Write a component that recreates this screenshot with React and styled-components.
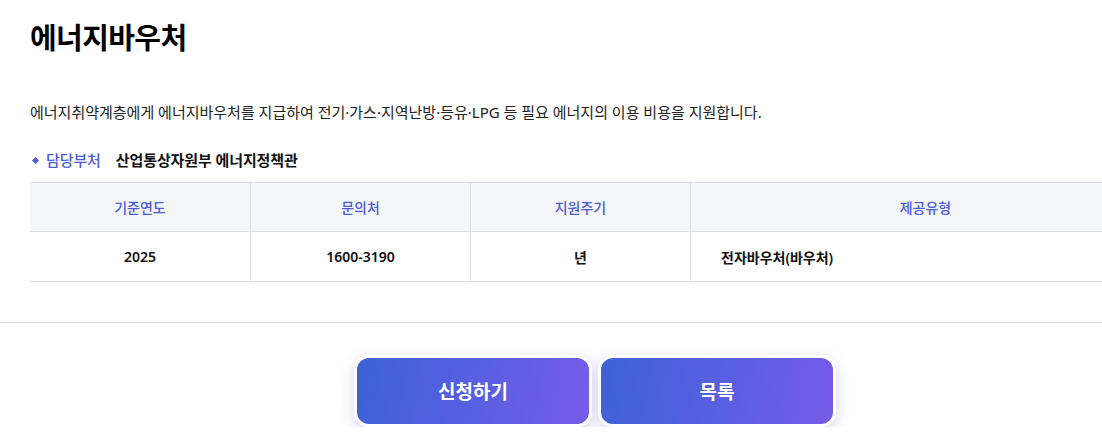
import React from 'react'
import styled, { createGlobalStyle } from 'styled-components'

const GlobalStyle = createGlobalStyle`
  html, body {
    margin: 0;
    padding: 0;
    background: #fff;
    overflow: hidden;
  }
  body {
    font-family: "Noto Sans", "Noto Sans CJK KR", sans-serif;
    color: #111;
  }
`

const Page = styled.div`
  width: 1190px;
  box-sizing: border-box;
`

const Section = styled.div`
  padding: 0 30px;
`

const Title = styled.h1`
  margin: 0;
  padding-top: 16px;
  font-size: 29px;
  line-height: 44px;
  font-weight: 700;
  letter-spacing: -0.6px;
  color: #000;
`

const Desc = styled.p`
  margin: 41px 0 0;
  font-size: 15px;
  line-height: 22px;
  color: #222;
  letter-spacing: 0;
`

const Manager = styled.div`
  display: flex;
  align-items: center;
  margin-top: 26px;
  font-size: 15px;
  line-height: 22px;
  letter-spacing: -0.1px;
`

const Label = styled.span`
  display: flex;
  align-items: center;
  gap: 8px;
  color: #4a5bd9;
  font-weight: 500;
  margin-right: 15px;

  &:before {
    content: "";
    width: 5px;
    height: 5px;
    background: #4a5bd9;
    transform: rotate(45deg);
    margin-left: 3px;
  }
`

const Value = styled.span`
  font-weight: 700;
  color: #111;
`

const Table = styled.div`
  display: grid;
  grid-template-columns: 220px 220px 220px 1fr;
  margin-top: 11px;
  border-top: 1px solid #dcdde2;
`

const Head = styled.div`
  height: 48px;
  display: flex;
  align-items: center;
  justify-content: center;
  background: #f5f6fa;
  color: #4a5bd9;
  font-size: 14px;
  font-weight: 500;
  border-bottom: 1px solid #dcdde2;
  border-left: ${p => (p.$first ? 'none' : '1px solid #dcdde2')};
`

const Cell = styled.div`
  height: 49px;
  display: flex;
  align-items: center;
  justify-content: ${p => (p.$left ? 'flex-start' : 'center')};
  padding-left: ${p => (p.$left ? '30px' : '0')};
  font-size: 14px;
  font-weight: 600;
  color: #111;
  border-bottom: 1px solid #dcdde2;
  border-left: ${p => (p.$first ? 'none' : '1px solid #dcdde2')};
`

const Divider = styled.hr`
  margin: 40px 0 0;
  border: none;
  border-top: 1px solid #dcdcdc;
`

const Buttons = styled.div`
  display: flex;
  justify-content: center;
  gap: 6px;
  margin-top: 32px;
`

const Button = styled.button`
  width: 238px;
  height: 72px;
  box-sizing: border-box;
  border: 3px solid #fff;
  border-radius: 15px;
  background: linear-gradient(100deg, #3d62d6 0%, #5a5fe2 55%, #775ce9 100%);
  color: #fff;
  font-family: inherit;
  font-size: 19px;
  font-weight: 700;
  box-shadow: 0 4px 14px rgba(110, 100, 210, 0.28);
  cursor: pointer;
`

const rows = [
  { label: '기준연도', value: '2025' },
  { label: '문의처', value: '1600-3190' },
  { label: '지원주기', value: '년' },
  { label: '제공유형', value: '전자바우처(바우처)', left: true },
]

const App = () => {
  return (
    <Page>
      <GlobalStyle />
      <Section>
        <Title>에너지바우처</Title>
        <Desc>
          에너지취약계층에게 에너지바우처를 지급하여 전기·가스·지역난방·등유·LPG 등 필요 에너지의 이용 비용을 지원합니다.
        </Desc>
        <Manager>
          <Label>담당부처</Label>
          <Value>산업통상자원부 에너지정책관</Value>
        </Manager>
        <Table>
          {rows.map((r, i) => (
            <Head key={r.label} $first={i === 0}>{r.label}</Head>
          ))}
          {rows.map((r, i) => (
            <Cell key={r.label} $first={i === 0} $left={r.left}>{r.value}</Cell>
          ))}
        </Table>
      </Section>
      <Divider />
      <Buttons>
        <Button>신청하기</Button>
        <Button>목록</Button>
      </Buttons>
    </Page>
  )
}

export default App
